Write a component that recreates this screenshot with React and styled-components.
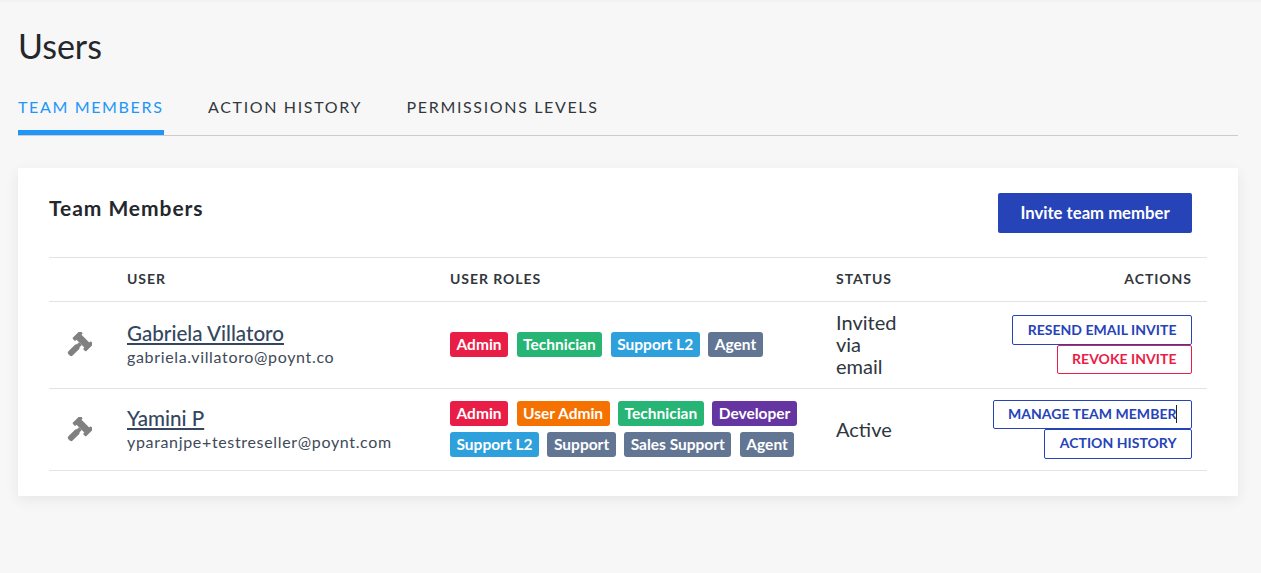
import React from 'react'
import styled, { createGlobalStyle } from 'styled-components'

const GlobalStyle = createGlobalStyle`
  html, body {
    margin: 0;
    background: #f7f7f7;
    font-family: Lato, "Open Sans", sans-serif;
    color: #24272b;
  }
`

const Page = styled.div`
  height: 573px;
  box-sizing: border-box;
  padding: 0 23px 0 18px;
  border-top: 2px solid #f2f2f2;
  overflow: hidden;
`

const Title = styled.h1`
  margin: 24px 0 0;
  font-size: 34px;
  line-height: 40px;
  font-weight: 400;
  color: #24272b;
`

const Tabs = styled.div`
  display: flex;
  gap: 44.5px;
  height: 69px;
  border-bottom: 1px solid #ccc;
`

const Tab = styled.div`
  display: flex;
  align-items: center;
  padding-top: 17px;
  box-sizing: border-box;
  height: 69px;
  font-size: 16px;
  letter-spacing: 1.65px;
  color: ${p => (p.$active ? '#2196f9' : '#33373d')};
  border-bottom: ${p => (p.$active ? '5px solid #2196f9' : '5px solid transparent')};
`

const Card = styled.div`
  margin-top: 32px;
  height: 328px;
  box-sizing: border-box;
  padding: 25px 31px 0;
  background: #fff;
  box-shadow: 0 4px 14px rgba(0, 0, 0, 0.07);
`

const CardHeader = styled.div`
  display: flex;
  justify-content: space-between;
  align-items: flex-start;
  height: 64px;
  padding-right: 15px;
`

const CardTitle = styled.h2`
  margin: 3px 0 0;
  font-size: 21px;
  line-height: 24px;
  font-weight: 700;
  letter-spacing: 0.95px;
  color: #24272b;
`

const InviteButton = styled.button`
  width: 194px;
  height: 40px;
  border: 0;
  border-radius: 2px;
  background: #2743b8;
  color: #fff;
  font: 700 16.7px Lato, sans-serif;
`

const Row = styled.div`
  display: grid;
  grid-template-columns: 78px 323px 386px 1fr;
  align-items: center;
  height: ${p => p.$height}px;
  box-sizing: border-box;
  padding-right: 15px;
  border-top: 1px solid ${p => (p.$head ? '#e2e2e2' : '#dfe3ea')};
  &:last-child {
    border-bottom: 1px solid #dfe3ea;
  }
`

const HeadCell = styled.div`
  margin-top: -2px;
  font-size: 14px;
  font-weight: 700;
  letter-spacing: 0.95px;
  color: #33373d;
`

const IconCell = styled.div`
  display: flex;
  padding-left: 17px;
`

const UserName = styled.a`
  display: block;
  font-size: 20.6px;
  line-height: 24px;
  font-weight: 500;
  color: #34475f;
  text-decoration: underline;
  text-underline-offset: 2px;
`

const UserEmail = styled.div`
  font-size: 16px;
  line-height: 24px;
  letter-spacing: 0.66px;
  color: #3e4a59;
`

const TagList = styled.div`
  display: flex;
  flex-wrap: wrap;
  gap: 6px 8.5px;
  margin-bottom: 1px;
`

const Tag = styled.span`
  display: inline-flex;
  align-items: center;
  height: 25px;
  padding: 0 6.5px 1px;
  box-sizing: border-box;
  border-radius: 3px;
  background: ${p => p.$color};
  color: #fff;
  font-size: 15.5px;
  font-weight: 700;
`

const Status = styled.div`
  width: 66px;
  margin-top: -2px;
  font-size: 20px;
  line-height: 22px;
  color: #2e3640;
`

const Actions = styled.div`
  display: flex;
  flex-direction: column;
  align-items: flex-end;
  margin-bottom: 1px;
`

const ActionButton = styled.button`
  position: relative;
  height: ${p => (p.$short ? 29 : 30)}px;
  box-sizing: border-box;
  padding: 0 14.5px 2px;
  border: 1px solid ${p => (p.$danger ? '#e91e47' : '#2743b8')};
  border-radius: 2px;
  background: #fff;
  color: ${p => (p.$danger ? '#e91e47' : '#2743b8')};
  font: 700 14px Lato, sans-serif;
  letter-spacing: 0.03px;
`

const TextCaret = styled.span`
  position: absolute;
  right: 14px;
  top: 4px;
  width: 1px;
  height: 18px;
  background: #222;
`

const Split = styled.div`
  display: flex;
  justify-content: space-between;
  align-items: center;
`

const Gavel = () => (
  <svg width="26" height="26" viewBox="0 0 26 26" fill="#808080">
    <g transform="rotate(45 13 13)">
      <rect x="5" y="4" width="16" height="7" />
      <rect x="3.5" y="2" width="4" height="11" rx="1" />
      <rect x="18.5" y="2" width="4" height="11" rx="1" />
      <rect x="11" y="11" width="4" height="4" />
      <rect x="10" y="14" width="6" height="13" rx="2" />
    </g>
  </svg>
)

const colors = {
  Admin: '#e91e47',
  'User Admin': '#f57200',
  Technician: '#26b574',
  Developer: '#6535a1',
  'Support L2': '#2ea1dc',
  Support: '#627694',
  'Sales Support': '#627694',
  Agent: '#627694',
}

const members = [
  {
    name: 'Gabriela Villatoro',
    email: 'gabriela.villatoro@poynt.co',
    roles: ['Admin', 'Technician', 'Support L2', 'Agent'],
    status: 'Invited via email',
    height: 87,
    actions: [{ label: 'RESEND EMAIL INVITE' }, { label: 'REVOKE INVITE', danger: true, short: true }],
  },
  {
    name: 'Yamini P',
    email: 'yparanjpe+testreseller@poynt.com',
    roles: ['Admin', 'User Admin', 'Technician', 'Developer', 'Support L2', 'Support', 'Sales Support', 'Agent'],
    status: 'Active',
    height: 83,
    actions: [{ label: 'MANAGE TEAM MEMBER', caret: true, short: true }, { label: 'ACTION HISTORY' }],
  },
]

const App = () => (
  <Page>
    <GlobalStyle />
    <Title>Users</Title>
    <Tabs>
      <Tab $active>TEAM MEMBERS</Tab>
      <Tab>ACTION HISTORY</Tab>
      <Tab>PERMISSIONS LEVELS</Tab>
    </Tabs>

    <Card>
      <CardHeader>
        <CardTitle>Team Members</CardTitle>
        <InviteButton>Invite team member</InviteButton>
      </CardHeader>

      <Row $head $height={44}>
        <span />
        <HeadCell>USER</HeadCell>
        <HeadCell>USER ROLES</HeadCell>
        <HeadCell>
          <Split>
            <span>STATUS</span>
            <span>ACTIONS</span>
          </Split>
        </HeadCell>
      </Row>

      {members.map(m => (
        <Row key={m.email} $height={m.height}>
          <IconCell><Gavel /></IconCell>
          <div>
            <UserName>{m.name}</UserName>
            <UserEmail>{m.email}</UserEmail>
          </div>
          <TagList>
            {m.roles.map(r => <Tag key={r} $color={colors[r]}>{r}</Tag>)}
          </TagList>
          <Split>
            <Status>{m.status}</Status>
            <Actions>
              {m.actions.map(a => (
                <ActionButton key={a.label} $danger={a.danger} $short={a.short}>
                  {a.label}
                  {a.caret && <TextCaret />}
                </ActionButton>
              ))}
            </Actions>
          </Split>
        </Row>
      ))}
    </Card>
  </Page>
)

export default App
